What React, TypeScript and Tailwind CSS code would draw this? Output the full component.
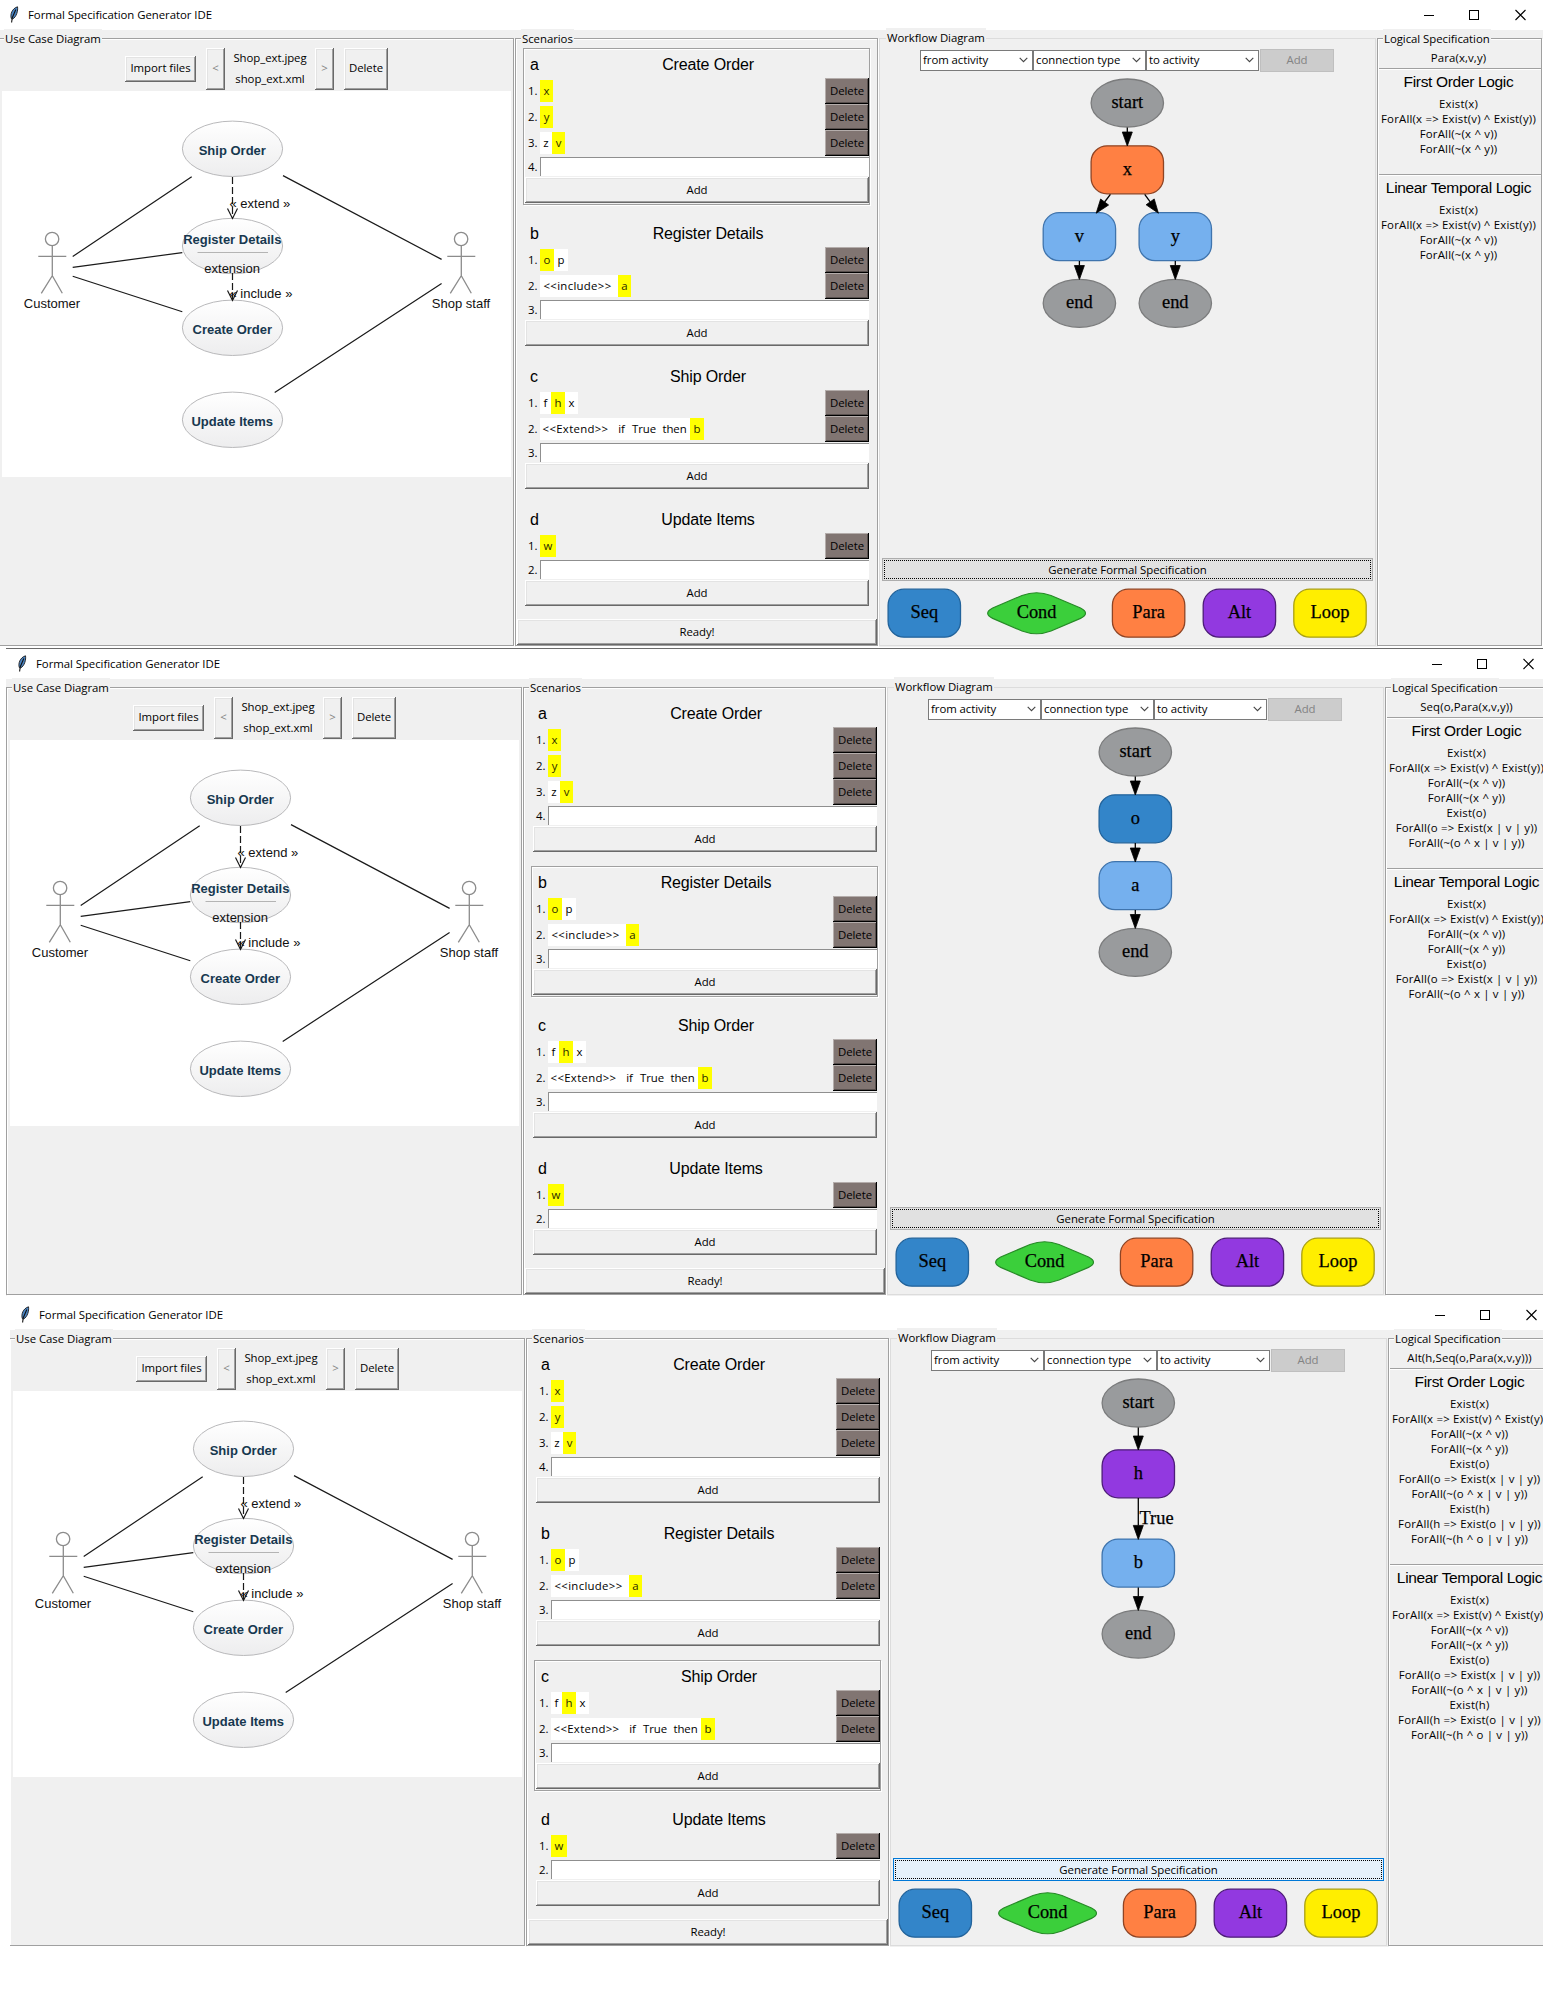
import type { ReactNode } from "react";

type Item = { t: string; w: number; hl?: boolean };
type Scenario = { id: string; title: string; rows: Item[][] };
type Node = { x: number; y: number; label: string; kind: keyof typeof FILLS };
type Edge = { x1: number; y1: number; x2: number; y2: number };
type Flow = { nodes: Node[]; edges: Edge[]; label?: { x: number; y: number; text: string } };

const FILLS = {
  end: ["#999b9d", "#7b7c7d"],
  para: ["#ff8043", "#8f4424"],
  item: ["#75b0ee", "#3f74ad"],
  seq: ["#3385c9", "#22639b"],
  alt: ["#9239e0", "#4d1c78"],
  loop: ["#ffee00", "#aaa012"],
};

const SCENARIOS: Scenario[] = [
  {
    id: "a",
    title: "Create Order",
    rows: [[{ t: "x", w: 13, hl: true }], [{ t: "y", w: 13, hl: true }], [{ t: "z", w: 12 }, { t: "v", w: 13, hl: true }]],
  },
  {
    id: "b",
    title: "Register Details",
    rows: [
      [{ t: "o", w: 14, hl: true }, { t: "p", w: 14 }],
      [{ t: "<<include>>", w: 78 }, { t: "a", w: 13, hl: true }],
    ],
  },
  {
    id: "c",
    title: "Ship Order",
    rows: [
      [{ t: "f", w: 11 }, { t: "h", w: 14, hl: true }, { t: "x", w: 13 }],
      [
        { t: "<<Extend>>", w: 74 },
        { t: "if", w: 15 },
        { t: "True", w: 30 },
        { t: "then", w: 31 },
        { t: "b", w: 14, hl: true },
      ],
    ],
  },
  { id: "d", title: "Update Items", rows: [[{ t: "w", w: 16, hl: true }]] },
];

const RAISED =
  "flex items-center justify-center bg-[#f0f0f0] shadow-[inset_-1px_-1px_0_#696969,inset_1px_1px_0_#fff,inset_-2px_-2px_0_#a0a0a0,inset_2px_2px_0_#e3e3e3]";
const GROOVE = "border border-[#a0a0a0] shadow-[inset_1px_1px_0_#fff,1px_1px_0_#fff]";

function Frame({ label, className, children, light }: { label: string; className: string; children: ReactNode; light?: boolean }) {
  return (
    <div className={`mt-2 flex h-[608px] shrink-0 flex-col ${light ? "border border-[#dcdcdc]" : GROOVE} ${className}`}>
      <div className={`z-10 flex h-[18px] shrink-0 ${light ? "-mt-[11px] pl-[6px]" : "-mt-[10px] pl-[5px]"}`}>
        <span className="bg-[#f0f0f0] px-px leading-[19px]">{label}</span>
      </div>
      {children}
    </div>
  );
}

function Actor({ x, name }: { x: number; name: string }) {
  return (
    <g>
      <g fill="none" stroke="#8c8c8c" strokeWidth="1.3">
        <circle cx={x - 0.2} cy="239" r="6.7" />
        <path d={`M${x} 245.7V275.7M${x - 14} 256.4H${x + 14}M${x - 11} 293.3L${x} 275.7L${x + 10} 293.3`} />
      </g>
      <text x={x - 0.3} y="307.7" textAnchor="middle" fontSize="13" fill="#111">
        {name}
      </text>
    </g>
  );
}

function UseCaseDrawing() {
  const cases: [string, number][] = [
    ["Ship Order", 148.8],
    ["Register Details", 246],
    ["Create Order", 327.8],
    ["Update Items", 419.8],
  ];
  return (
    <svg width="509" height="386" viewBox="2 91 509 386" className="ml-[3px] block shrink-0 bg-white font-['Liberation_Sans',sans-serif] tracking-normal">
      <defs>
        <linearGradient id="oval" x1="0" y1="0" x2="0" y2="1">
          <stop offset="0" stopColor="#fff" />
          <stop offset="1" stopColor="#ededee" />
        </linearGradient>
      </defs>
      {cases.map(([name, cy]) => (
        <ellipse key={name} cx="232.5" cy={cy} rx="50.1" ry="27.7" fill="url(#oval)" stroke="#b9b9bb" />
      ))}
      <path d="M197.5 252.5H268" stroke="#b4b4b4" />
      <g fill="none" stroke="#1a1a1a" strokeWidth="1.2">
        <path d="M191.7 176.7L72.7 256.5M182.3 252.6L72.7 267.4M72.7 276.3L182.3 311.7M283 175.6L441.6 259.4M441.6 283.6L274.7 392.4" />
        <path d="M232.5 177V218M232.5 273V300" strokeDasharray="7 3" />
        <path d="M227.5 208.5L232.5 218.5L237.5 208.5M227.5 290.5L232.5 300.5L237.5 290.5" />
      </g>
      <g fontSize="13" fontWeight="700" fill="#17384f" textAnchor="middle">
        <text x="232.3" y="155">Ship Order</text>
        <text x="232.3" y="244">Register Details</text>
        <text x="232.3" y="334">Create Order</text>
        <text x="232.3" y="426">Update Items</text>
      </g>
      <g fontSize="13" fill="#111">
        <text x="229.5" y="208">« extend »</text>
        <text x="204.3" y="272.7">extension</text>
        <text x="229.5" y="298">« include »</text>
      </g>
      <Actor x={52.3} name="Customer" />
      <Actor x={461.3} name="Shop staff" />
    </svg>
  );
}

function UseCasePanel() {
  return (
    <Frame label="Use Case Diagram" className="w-[516px]">
      <div className="ml-[126px] flex h-[44px] shrink-0 items-center">
        <div className={`${RAISED} h-[26px] w-[71px] pb-[3px]`}>Import files</div>
        <div className={`${RAISED} ml-[10px] h-[42px] w-[19px] pb-[2px] text-[#838383]`}>&lt;</div>
        <div className="flex w-[90px] flex-col items-center pb-[2px] leading-[21px]">
          <span>Shop_ext.jpeg</span>
          <span>shop_ext.xml</span>
        </div>
        <div className={`${RAISED} h-[42px] w-[19px] pb-[2px] text-[#838383]`}>&gt;</div>
        <div className={`${RAISED} ml-[10px] h-[42px] w-[44px] pb-[2px]`}>Delete</div>
      </div>
      <UseCaseDrawing />
    </Frame>
  );
}

function ScenarioCard({ s, active }: { s: Scenario; active: boolean }) {
  return (
    <div className={`mb-3 ml-[7px] w-[347px] border p-px pr-0 ${active ? "border-[#a0a0a0] shadow-[inset_1px_1px_0_#fff,1px_1px_0_#fff]" : "border-transparent"}`}>
      <div className="flex h-[28px] items-center pt-[2px] font-['Liberation_Sans',sans-serif] text-[16px] tracking-[-0.14px]">
        <span className="w-[22px] pl-[5px]">{s.id}</span>
        <span className="flex-1 text-center">{s.title}</span>
      </div>
      {s.rows.map((row, i) => (
        <div key={i} className="flex h-[26px] items-center">
          <span className="w-[15px] pl-[3px]">{i + 1}.</span>
          {row.map((it, j) => (
            <span
              key={j}
              style={{ width: it.w }}
              className={`flex h-[22px] items-center justify-center whitespace-pre ${it.hl ? "bg-[#ff0] text-[#2a2a00]" : "bg-white"} ${it.t.startsWith("<<") ? "pr-[3px] tracking-[0.3px]" : ""}`}
            >
              {it.t}
            </span>
          ))}
          <span className="ml-auto flex h-[26px] w-[44px] items-center justify-center bg-[#817572] shadow-[inset_-1px_-1px_0_#000,inset_1px_1px_0_#b4adab,inset_-2px_-2px_0_#574f4d]">
            Delete
          </span>
        </div>
      ))}
      <div className="flex h-[21px] items-center">
        <span className="w-[15px] pl-[3px]">{s.rows.length + 1}.</span>
        <span className="h-[19px] flex-1 border-t border-l border-[#8f8f8f] bg-white" />
      </div>
      <div className={`${RAISED} h-[26px]`}>Add</div>
    </div>
  );
}

function Shape({ n }: { n: Node }) {
  const [fill, stroke] = FILLS[n.kind];
  return (
    <g>
      {n.kind === "end" ? (
        <ellipse cx={n.x} cy={n.y} rx="36.2" ry="24" fill={fill} stroke={stroke} strokeWidth="1.3" />
      ) : (
        <rect x={n.x - 36.2} y={n.y - 24} width="72.4" height="48" rx="16" fill={fill} stroke={stroke} strokeWidth="1.3" />
      )}
      <text x={n.x} y={n.y + 4.8} textAnchor="middle" fontSize="18.4" fill="#000" stroke="#000" strokeWidth="0.25">
        {n.label}
      </text>
    </g>
  );
}

function Arrow({ e }: { e: Edge }) {
  const len = Math.hypot(e.x2 - e.x1, e.y2 - e.y1);
  const ux = (e.x2 - e.x1) / len;
  const uy = (e.y2 - e.y1) / len;
  const bx = e.x2 - ux * 14;
  const by = e.y2 - uy * 14;
  return (
    <g stroke="#000" strokeWidth="1.3">
      <path d={`M${e.x1} ${e.y1}L${bx} ${by}`} />
      <path strokeWidth="0.8" d={`M${e.x2} ${e.y2}L${bx - uy * 5} ${by + ux * 5}L${bx + uy * 5} ${by - ux * 5}Z`} />
    </g>
  );
}

const PALETTE: Node[] = [
  { x: 924.3, y: 613.2, label: "Seq", kind: "seq" },
  { x: 1148.6, y: 613.2, label: "Para", kind: "para" },
  { x: 1239.4, y: 613.2, label: "Alt", kind: "alt" },
  { x: 1330, y: 613.2, label: "Loop", kind: "loop" },
];

function Combo({ text }: { text: string }) {
  return (
    <div className="flex h-[21px] w-[113px] items-center justify-between border border-[#7a7a7a] bg-white pr-[4px] pl-[2px]">
      <span className="pb-px">{text}</span>
      <svg width="9" height="6" viewBox="0 0 9 6">
        <path d="M0.7 0.8L4.5 4.6L8.3 0.8" fill="none" stroke="#444" strokeWidth="1.1" />
      </svg>
    </div>
  );
}

function WorkflowPanel({ flow, focused }: { flow: Flow; focused: boolean }) {
  return (
    <Frame label="Workflow Diagram" className="ml-px w-[497px]" light>
      <div className="mt-[2px] ml-[40px] flex h-[24px] shrink-0 items-center">
        <Combo text="from activity" />
        <Combo text="connection type" />
        <Combo text="to activity" />
        <div className="ml-px flex h-[23px] w-[74px] items-center justify-center border border-[#bfbfbf] bg-[#ccc] pb-px text-[#838383]">Add</div>
      </div>
      <svg width="491" height="486" viewBox="882 72 491 486" className="ml-[2px] block shrink-0 font-['Liberation_Serif',serif] tracking-normal">
        {flow.nodes.map((n, i) => (
          <Shape key={i} n={n} />
        ))}
        {flow.edges.map((e, i) => (
          <Arrow key={i} e={e} />
        ))}
        {flow.label && (
          <text x={flow.label.x} y={flow.label.y} fontSize="18.4" stroke="#000" strokeWidth="0.25">
            {flow.label.text}
          </text>
        )}
      </svg>
      <div
        className={`ml-[2px] flex h-[23px] w-[491px] shrink-0 border p-px ${focused ? "border-[#0078d7] bg-[#e5f1fb]" : "border-[#adadad] bg-[#e1e1e1]"}`}
      >
        <div className="flex flex-1 items-center justify-center border border-dotted border-black">Generate Formal Specification</div>
      </div>
      <svg width="491" height="62" viewBox="882 581 491 62" className="ml-[2px] block shrink-0 font-['Liberation_Serif',serif] tracking-normal">
        <path
          d="M1022 595.5Q1036.600 590 1051 595.500L1080.500 608Q1090.500 613.200 1080.500 618.400L1051 631Q1036.600 636.500 1022 631L992.700 618.400Q982.700 613.200 992.700 608Z"
          fill="#3bcf3b"
          stroke="#278a27"
          strokeWidth="1.2"
        />
        <text x="1036.6" y="618" textAnchor="middle" fontSize="18.4" stroke="#000" strokeWidth="0.25">
          Cond
        </text>
        {PALETTE.map((n) => (
          <Shape key={n.label} n={n} />
        ))}
      </svg>
    </Frame>
  );
}

function LogicBlock({ title, lines }: { title: string; lines: string[] }) {
  return (
    <div className="ml-px border-t border-[#a0a0a0] pb-[17px] shadow-[inset_0_1px_0_#fff]">
      <div className="mr-[3px] flex h-[28px] items-center justify-center pb-[2px] font-['Liberation_Sans',sans-serif] text-[15.5px] tracking-[-0.33px] whitespace-nowrap">
        {title}
      </div>
      <div className="-mt-px mr-[3px] mb-px">
        {lines.map((l, i) => (
          <div key={i} className="flex h-[15px] items-center justify-center tracking-[0.2px] whitespace-nowrap">
            {l}
          </div>
        ))}
      </div>
    </div>
  );
}

function Feather() {
  return (
    <svg width="10" height="17" viewBox="0 0 10 17" className="mr-[9px] ml-[11px]">
      <path d="M2.3 12.5C1 8.500 3 2.500 8.500 0.800C9.200 4.500 7.500 11 3.600 13Z" fill="#4b86c6" stroke="#1a1a1a" strokeWidth="0.9" />
      <path d="M6.800 3.500L3.200 12L2.600 16.500" fill="none" stroke="#111" strokeWidth="1.100" />
    </svg>
  );
}

function AppWindow({ formula, lines, active, flow, focused }: { formula: string; lines: string[]; active: string; flow: Flow; focused: boolean }) {
  return (
    <div className="flex h-[647px] w-[1545px] shrink-0 flex-col">
      <div className="flex h-[30px] shrink-0 items-center bg-white pb-px">
        <Feather />
        <span>Formal Specification Generator IDE</span>
        <svg width="103" height="12" viewBox="0 0 103 12" className="mr-[16px] ml-auto" fill="none" stroke="#000">
          <path d="M0 6.500H10M91.500 1L101.500 11M101.500 1L91.500 11" strokeWidth="1.100" />
          <rect x="45.500" y="1.500" width="9" height="9" />
        </svg>
      </div>
      <div className="flex h-[617px] bg-[#f0f0f0]">
        <UseCasePanel />
        <Frame label="Scenarios" className="ml-px w-[363px]">
          <div className="mt-px flex h-[571px] shrink-0 flex-col">
            {SCENARIOS.map((s) => (
              <ScenarioCard key={s.id} s={s} active={s.id === active} />
            ))}
          </div>
          <div className={`${RAISED} ml-px h-[26px] w-[360px] shrink-0`}>Ready!</div>
        </Frame>
        <WorkflowPanel flow={flow} focused={focused} />
        <Frame label="Logical Specification" className="ml-px w-[165px]">
          <div className="mr-[2px] flex h-[21px] shrink-0 items-center justify-center tracking-[0.13px]">{formula}</div>
          <LogicBlock title="First Order Logic" lines={lines} />
          <LogicBlock title="Linear Temporal Logic" lines={lines} />
        </Frame>
      </div>
    </div>
  );
}

const down = (x: number, y1: number, y2: number): Edge => ({ x1: x, y1, x2: x, y2 });

const FLOW_A: Flow = {
  nodes: [
    { x: 1127.3, y: 103, label: "start", kind: "end" },
    { x: 1127.3, y: 169.8, label: "x", kind: "para" },
    { x: 1079.4, y: 236.7, label: "v", kind: "item" },
    { x: 1175.3, y: 236.7, label: "y", kind: "item" },
    { x: 1079.4, y: 303.3, label: "end", kind: "end" },
    { x: 1175.3, y: 303.3, label: "end", kind: "end" },
  ],
  edges: [
    down(1127.3, 127.5, 146),
    { x1: 1110.4, y1: 194.3, x2: 1096.2, y2: 213.2 },
    { x1: 1144.7, y1: 194.3, x2: 1158.4, y2: 213.2 },
    down(1079.4, 261, 279.5),
    down(1175.3, 261, 279.5),
  ],
};

const FLOW_B: Flow = {
  nodes: [
    { x: 1127.3, y: 103, label: "start", kind: "end" },
    { x: 1127.3, y: 169.8, label: "o", kind: "seq" },
    { x: 1127.3, y: 236.7, label: "a", kind: "item" },
    { x: 1127.3, y: 303.3, label: "end", kind: "end" },
  ],
  edges: [down(1127.3, 127.5, 146), down(1127.3, 194, 213), down(1127.3, 261, 279.5)],
};

const FLOW_C: Flow = {
  nodes: [
    { x: 1127.3, y: 103, label: "start", kind: "end" },
    { x: 1127.3, y: 173.8, label: "h", kind: "alt" },
    { x: 1127.3, y: 263.1, label: "b", kind: "item" },
    { x: 1127.3, y: 334.1, label: "end", kind: "end" },
  ],
  edges: [down(1127.3, 127.5, 150), down(1127.3, 198, 239.4), down(1127.3, 287.5, 310.5)],
  label: { x: 1128.5, y: 223.6, text: "True" },
};

const L1 = ["Exist(x)", "ForAll(x => Exist(v) ^ Exist(y))", "ForAll(~(x ^ v))", "ForAll(~(x ^ y))"];
const L2 = [...L1, "Exist(o)", "ForAll(o => Exist(x | v | y))", "ForAll(~(o ^ x | v | y))"];
const L3 = [...L2, "Exist(h)", "ForAll(h => Exist(o | v | y))", "ForAll(~(h ^ o | v | y))"];

export default function App() {
  return (
    <div className="flex h-[1996px] w-[1543px] flex-col overflow-hidden bg-white font-['Open_Sans','Noto_Sans',sans-serif] text-[11.4px] leading-[16px] tracking-[-0.05px] text-black">
      <div className="-ml-[2px] h-[648px] shrink-0">
        <AppWindow formula="Para(x,v,y)" lines={L1} active="a" flow={FLOW_A} focused={false} />
      </div>
      <div className="ml-[6px] h-[652px] shrink-0">
        <div className="h-px w-full bg-[#6b6b6b]" />
        <AppWindow formula="Seq(o,Para(x,v,y))" lines={L2} active="b" flow={FLOW_B} focused={false} />
      </div>
      <div className="ml-[10px] flex h-[647px] shrink-0 overflow-hidden">
        <div className="-ml-px shrink-0">
          <AppWindow formula="Alt(h,Seq(o,Para(x,v,y)))" lines={L3} active="c" flow={FLOW_C} focused />
        </div>
      </div>
    </div>
  );
}
